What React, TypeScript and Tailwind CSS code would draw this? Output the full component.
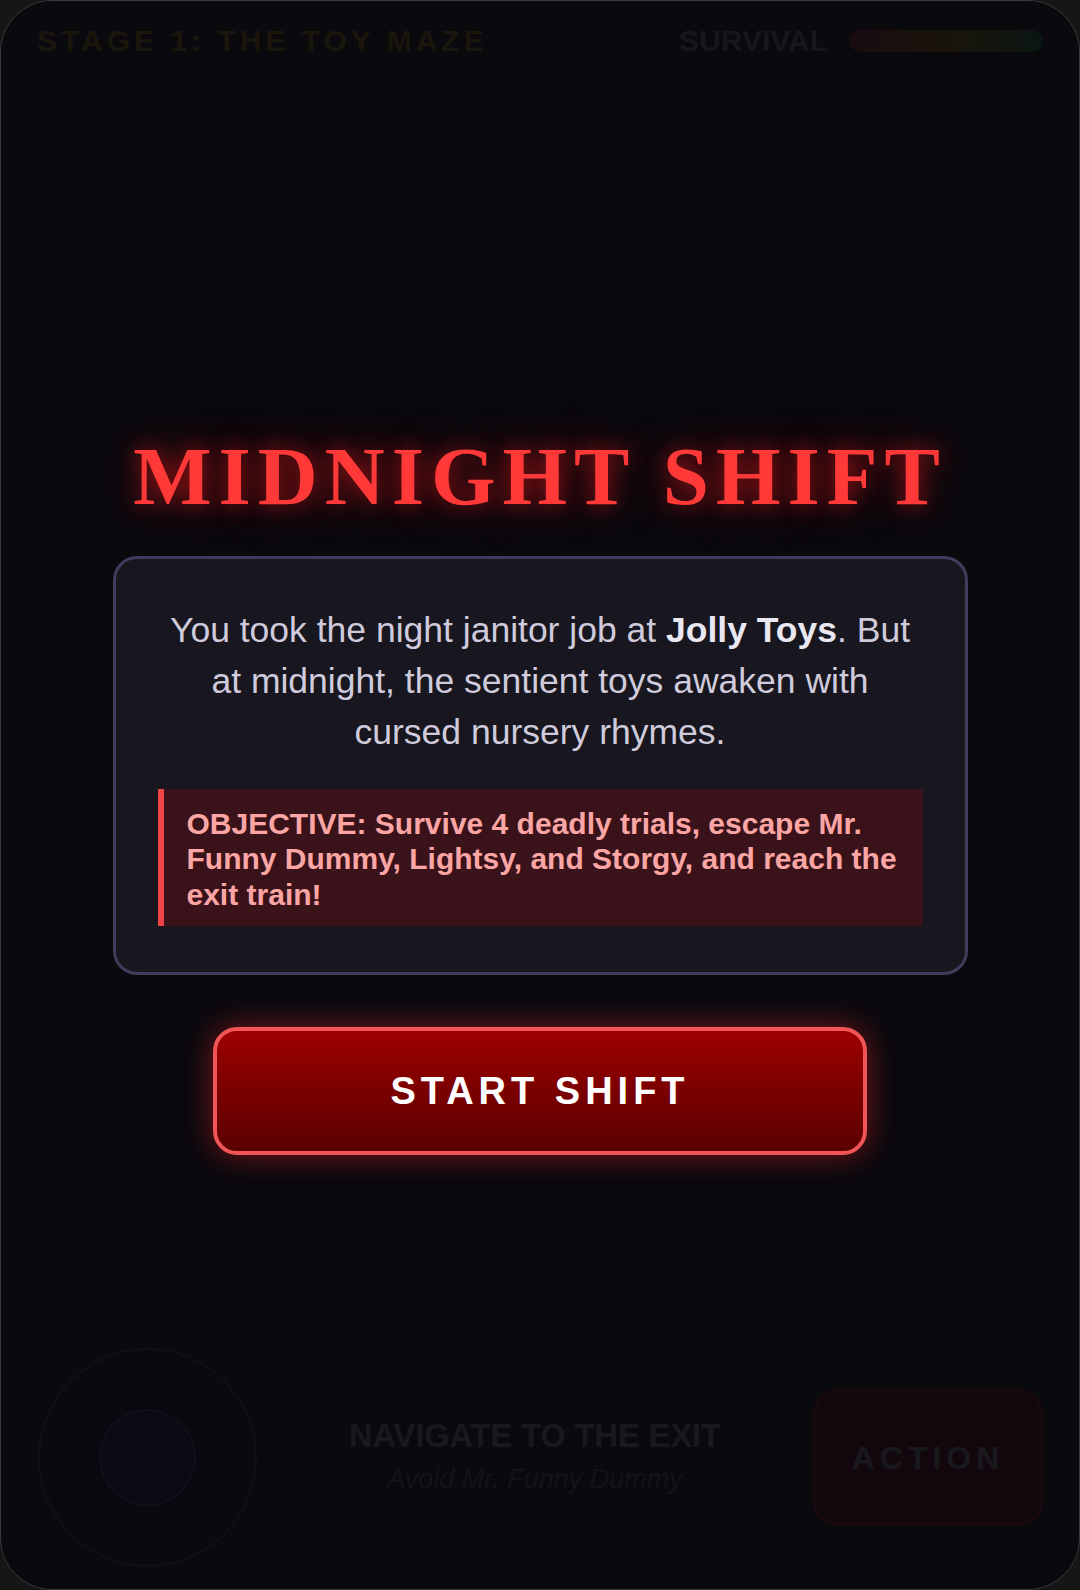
import React from 'react';

const sans = "font-['Liberation_Sans',Arial,sans-serif]";

const HealthBar = () => (
    <div className="h-[22px] w-[194px] overflow-hidden rounded-full bg-[#111]">
        <div className="h-full w-full rounded-full bg-gradient-to-r from-[#ef4444] via-[#eab308] to-[#22c55e]" />
    </div>
);

const Joystick = () => (
    <div className="flex h-[219px] w-[219px] items-center justify-center rounded-full border-2 border-[#8b7cf6]/70 bg-[#8b7cf6]/10">
        <div className="h-[97px] w-[97px] rounded-full border-2 border-[#9d8cff]/60 bg-[#6d5bd0]/50" />
    </div>
);

export default function App() {
    return (
        <div className={`min-h-screen bg-[#161616] ${sans}`}>
            <div className="relative flex h-[1590px] w-full flex-col justify-between overflow-hidden rounded-[52px] border border-[#3a3a3a] bg-[#252533]">
                {/* HUD */}
                <div className="flex items-center justify-between px-[36px] pt-[22px]">
                    <h1 className="text-[30px] font-bold leading-[36px] tracking-[4px] text-[#facc15]">STAGE 1: THE TOY MAZE</h1>
                    <div className="flex items-center gap-[21px]">
                        <span className="text-[30px] font-bold leading-[36px] text-[#d4d4d8]">SURVIVAL</span>
                        <HealthBar />
                    </div>
                </div>

                {/* controls */}
                <div className="flex items-center justify-between pb-[22px] pl-[37px] pr-[36px]">
                    <Joystick />
                    <div className="flex flex-col items-center gap-[7px] pb-[2px]">
                        <span className="text-[32.5px] font-bold leading-[38px] text-[#e5e7eb]">NAVIGATE TO THE EXIT</span>
                        <span className="text-[27px] italic leading-[34px] text-[#a1a1aa]">Avoid Mr. Funny Dummy</span>
                    </div>
                    <button className="flex h-[137px] w-[230px] items-center justify-center rounded-[24px] border-[3px] border-[#dc2626] bg-[#8b1020] text-[32px] font-bold tracking-[5px] text-[#e5e7eb]">
                        ACTION
                    </button>
                </div>

                {/* intro overlay */}
                <div className="absolute inset-0 flex flex-col items-center justify-center bg-[#07070b]/[0.92]">
                    <h2 className="mb-[38px] font-['Liberation_Serif','Times_New_Roman',serif] text-[83px] font-bold leading-none tracking-[7px] text-[#ff3838] [text-shadow:0_0_22px_rgba(255,30,30,0.6),0_0_60px_rgba(255,0,0,0.3)]">
                        MIDNIGHT SHIFT
                    </h2>

                    <div className="w-[855px] rounded-[24px] border-[3px] border-[#403c5c] bg-[#18161f] px-[42px] pb-[46px] pt-[46px]">
                        <p className="mb-[31px] text-center text-[35.5px] leading-[51px] text-[#cfcbdc]">
                            You took the night janitor job at <b className="text-[#e9e7f1]">Jolly Toys</b>. But at midnight, the sentient toys awaken with cursed nursery rhymes.
                        </p>
                        <div className="border-l-[6px] border-[#ef4444] bg-[#3a1219] pb-[14px] pl-[23px] pr-[12px] pt-[17px] text-[30px] font-bold leading-[35.5px] text-[#fca5a5]">
                            OBJECTIVE: Survive 4 deadly trials, escape Mr. Funny Dummy, Lightsy, and Storgy, and reach the exit train!
                        </div>
                    </div>

                    <button className="mt-[52px] flex h-[128px] w-[654px] items-center justify-center rounded-[24px] border-4 border-[#f25555] bg-gradient-to-b from-[#9e0000] to-[#5a0000] text-[38px] font-bold tracking-[5px] text-white shadow-[0_0_32px_rgba(255,40,40,0.45)]">
                        START SHIFT
                    </button>
                </div>
            </div>
        </div>
    );
}
